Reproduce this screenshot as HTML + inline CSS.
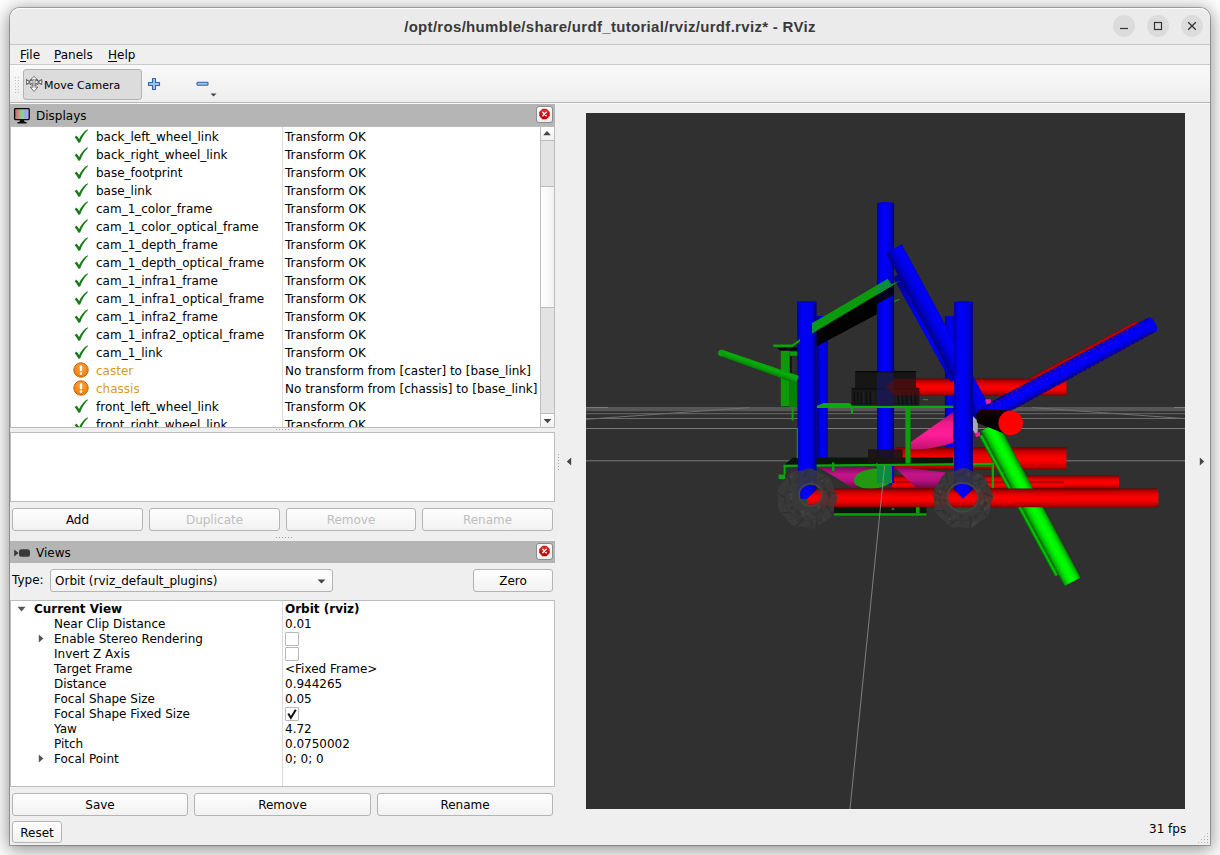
<!DOCTYPE html>
<html lang="en"><head><meta charset="utf-8"><title>RViz</title>
<style>
html,body{margin:0;padding:0;background:#fff;}
body{width:1220px;height:855px;overflow:hidden;position:relative;font-family:"DejaVu Sans","Liberation Sans",sans-serif;font-size:12px;color:#000;}
.abs{position:absolute;}
#win{position:absolute;left:10px;top:8px;width:1200px;height:837px;background:#efefef;border-radius:10px 10px 0 0;box-shadow:0 0 0 1px rgba(0,0,0,0.26),0 3px 18px 2px rgba(0,0,0,0.44);}
#title{position:absolute;left:0;top:0;width:1200px;height:36px;background:#ebebeb;box-shadow:inset 0 1px 0 #fdfdfd;border-radius:10px 10px 0 0;border-bottom:1px solid #c6c6c6;}
#title .t{position:absolute;left:0;width:1200px;top:10px;letter-spacing:0.31px;text-align:center;font-family:"Liberation Sans","DejaVu Sans",sans-serif;font-weight:bold;font-size:15px;color:#3a3a3a;white-space:nowrap;}
.wb{position:absolute;top:7px;width:22px;height:22px;border-radius:11px;background:#dcdcdc;}
#menu{position:absolute;left:0;top:37px;width:1200px;height:19px;background:#efefef;border-bottom:1px solid #c9c9c9;}
#menu span{position:absolute;top:3px;font-size:12px;white-space:nowrap;}
#menu u{text-decoration:underline;text-underline-offset:2px;}
#tool{position:absolute;left:0;top:57px;width:1200px;height:37px;background:linear-gradient(#f9f9f9,#eeeeee);border-bottom:1px solid #b6b6b6;box-shadow:0 1px 0 #f9f9f9;}
.btn{position:absolute;box-sizing:border-box;border:1px solid #b4b4b4;border-radius:3px;background:linear-gradient(#fefefe,#f2f2f2);text-align:center;white-space:nowrap;font-size:12px;}
.btn.dis{color:#bebebe;}
.dock{position:absolute;left:0;width:545px;height:22px;background:#b5b5b5;}
.dock .lbl{position:absolute;left:26px;top:5px;font-size:12px;}
.cls{position:absolute;left:525.5px;top:2px;width:17px;height:16.5px;box-sizing:border-box;border:1px solid #8c8c8c;border-radius:3px;background:linear-gradient(#ffffff,#ececec);}
.tree{position:absolute;left:0;width:545px;box-sizing:border-box;border:1px solid #bcbcbc;background:#fff;overflow:hidden;}
.r{position:absolute;left:0;height:18px;width:545px;white-space:nowrap;}
.r .ic{position:absolute;left:62.3px;top:0px;}
.r .n{position:absolute;left:85px;top:2px;font-size:12px;}
.r .v{position:absolute;left:274px;top:2px;font-size:12px;}
.r.warn .n{color:#d89a18;}
.vr{position:absolute;left:0;height:15px;width:545px;white-space:nowrap;}
.vr .vn{position:absolute;top:1px;font-size:12px;line-height:15px;}
.vr .vv{position:absolute;left:274px;top:1px;font-size:12px;line-height:15px;}
.vr .b{font-weight:bold;}
.vr .tw{position:absolute;}
.cb{position:absolute;left:274px;top:0.5px;width:14px;height:14px;box-sizing:border-box;border:1px solid #b9b9b9;background:#fff;border-radius:1px;}
#view{position:absolute;left:576px;top:105px;width:599px;height:696px;background:#303030;overflow:hidden;}
</style></head><body>
<div id="win">
 <div id="title"><div class="t">/opt/ros/humble/share/urdf_tutorial/rviz/urdf.rviz* - RViz</div>
  <div class="wb" style="left:1103px"><svg width="22" height="22" viewBox="0 0 22 22"><path d="M7 13.5 H15" stroke="#333" stroke-width="1.2"/></svg></div>
  <div class="wb" style="left:1137px"><svg width="22" height="22" viewBox="0 0 22 22"><rect x="7.5" y="7.5" width="7" height="7" fill="none" stroke="#333" stroke-width="1.2"/></svg></div>
  <div class="wb" style="left:1171px"><svg width="22" height="22" viewBox="0 0 22 22"><path d="M7.2 7.2 L14.8 14.8 M14.8 7.2 L7.2 14.8" stroke="#333" stroke-width="1.3"/></svg></div>
 </div>
 <div id="menu"><span style="left:10px"><u>F</u>ile</span><span style="left:44px"><u>P</u>anels</span><span style="left:98px"><u>H</u>elp</span></div>
 <div id="tool">
  <svg class="abs" style="left:3px;top:11px" width="8" height="18" viewBox="0 0 8 18"><g fill="#bdbdbd"><rect x="2" y="1" width="1" height="1"/><rect x="5" y="1" width="1" height="1"/><rect x="2" y="4" width="1" height="1"/><rect x="5" y="4" width="1" height="1"/><rect x="2" y="7" width="1" height="1"/><rect x="5" y="7" width="1" height="1"/><rect x="2" y="10" width="1" height="1"/><rect x="5" y="10" width="1" height="1"/><rect x="2" y="13" width="1" height="1"/><rect x="5" y="13" width="1" height="1"/><rect x="2" y="16" width="1" height="1"/><rect x="5" y="16" width="1" height="1"/></g></svg>
  <div class="abs" style="left:13px;top:4px;width:119px;height:31px;box-sizing:border-box;border:1px solid #b2b2b2;border-radius:3px;background:#dcdcdc;">
   <svg class="abs" style="left:1.9px;top:6.4px" width="17" height="17" viewBox="0 0 17 17"><g stroke="#454545" stroke-width="0.75" stroke-linejoin="round" fill="#fff"><path d="M8 0.5 L11.6 3.8 L8.8 3.8 L8.8 11.2 L11.8 11.2 L8 15.4 L4.3 11.2 L7.2 11.2 L7.2 3.8 L4.4 3.8 Z" fill="#f4f4f4"/><path d="M0.4 3.7 L3.4 5 Q5.4 3.4 8 3.4 Q10.6 3.4 12.6 5 L15.7 3.7 L15.7 8.4 L13 7.4 Q10.8 9.6 8 9.6 Q5.2 9.6 3 7.4 L0.4 8.4 Z" fill="none"/><path d="M0.4 3.7 L3.6 6 L0.4 8.4 Z"/><path d="M15.7 3.7 L12.4 6 L15.7 8.4 Z"/><ellipse cx="8" cy="5.8" rx="4.3" ry="2.1" fill="none"/></g><rect x="7.4" y="4" width="1.2" height="7" fill="#dcdcdc"/><path d="M8 1.2 L10.4 3.4 H5.6 Z M8 14.6 L10.4 11.7 H5.6 Z" fill="#fff"/></svg>
   <span class="abs" style="left:20px;top:9px;font-size:11px;white-space:nowrap">Move Camera</span>
  </div>
  <svg class="abs" style="left:137px;top:12px" width="14" height="14" viewBox="0 0 14 14"><path d="M5.5 1.5 H8.5 V5.5 H12.5 V8.5 H8.5 V12.5 H5.5 V8.5 H1.5 V5.5 H5.5 Z" fill="#9ec0ea" stroke="#3565a4" stroke-width="1.1" stroke-linejoin="round"/></svg>
  <svg class="abs" style="left:185px;top:16px" width="14" height="6" viewBox="0 0 14 6"><rect x="2" y="1.3" width="11" height="3" rx="0.8" fill="#9ec0ea" stroke="#3565a4" stroke-width="1.1"/></svg>
  <svg class="abs" style="left:199.5px;top:28px" width="7" height="4" viewBox="0 0 7 4"><path d="M0.5 0.5 H6.5 L3.5 3.6 Z" fill="#444"/></svg>
 </div>

 <!-- Displays dock -->
 <div class="dock" style="top:96px">
  <svg class="abs" style="left:3px;top:3px" width="18" height="18" viewBox="0 0 18 18"><defs><linearGradient id="mg" x1="0" x2="1" y1="0" y2="0"><stop offset="0" stop-color="#c86a6a"/><stop offset="0.28" stop-color="#d08888"/><stop offset="0.40" stop-color="#86cc86"/><stop offset="0.60" stop-color="#8ed28e"/><stop offset="0.72" stop-color="#a2a2f2"/><stop offset="1" stop-color="#b0b0f8"/></linearGradient></defs><rect x="1.6" y="1.6" width="14.6" height="11" rx="0.8" fill="url(#mg)" stroke="#0a0a0a" stroke-width="1.3"/><path d="M7 13 H11 L11.6 15 H6.4 Z" fill="#0a0a0a"/><rect x="4.2" y="15" width="9.6" height="1.6" rx="0.8" fill="#0a0a0a"/></svg>
  <span class="lbl">Displays</span>
  <div class="cls"><svg width="15" height="15" viewBox="0 0 15 15" style="position:absolute;left:0;top:0"><defs><linearGradient id="cg1" x1="0" x2="0" y1="0" y2="1"><stop offset="0" stop-color="#e23030"/><stop offset="1" stop-color="#b80000"/></linearGradient></defs><polygon points="5.5,2.1 9.5,2.1 12.4,5 12.4,9 9.5,11.9 5.5,11.9 2.6,9 2.6,5" fill="url(#cg1)" stroke="#a80a0a" stroke-width="0.6"/><path d="M5.8 5.3 L9.2 8.7 M9.2 5.3 L5.8 8.7" stroke="#fff" stroke-width="1.4" stroke-linecap="round"/></svg></div>
 </div>
 <div class="tree" style="top:118px;height:302px;">
  <div class="r" style="top:1px"><svg class="ic" width="16" height="16" viewBox="0 0 16 16"><path d="M1.6 9.2 L3.6 7.6 L6.2 11 C8 6.8 10.8 3.4 14.6 1.2 L15 1.9 C11.6 5 9 9.2 7.2 14.6 L5.4 14.8 C4.4 12.6 3.2 10.8 1.6 9.2 Z" fill="#1b7a1b"/></svg><span class="n">back_left_wheel_link</span><span class="v">Transform OK</span></div>
<div class="r" style="top:19px"><svg class="ic" width="16" height="16" viewBox="0 0 16 16"><path d="M1.6 9.2 L3.6 7.6 L6.2 11 C8 6.8 10.8 3.4 14.6 1.2 L15 1.9 C11.6 5 9 9.2 7.2 14.6 L5.4 14.8 C4.4 12.6 3.2 10.8 1.6 9.2 Z" fill="#1b7a1b"/></svg><span class="n">back_right_wheel_link</span><span class="v">Transform OK</span></div>
<div class="r" style="top:37px"><svg class="ic" width="16" height="16" viewBox="0 0 16 16"><path d="M1.6 9.2 L3.6 7.6 L6.2 11 C8 6.8 10.8 3.4 14.6 1.2 L15 1.9 C11.6 5 9 9.2 7.2 14.6 L5.4 14.8 C4.4 12.6 3.2 10.8 1.6 9.2 Z" fill="#1b7a1b"/></svg><span class="n">base_footprint</span><span class="v">Transform OK</span></div>
<div class="r" style="top:55px"><svg class="ic" width="16" height="16" viewBox="0 0 16 16"><path d="M1.6 9.2 L3.6 7.6 L6.2 11 C8 6.8 10.8 3.4 14.6 1.2 L15 1.9 C11.6 5 9 9.2 7.2 14.6 L5.4 14.8 C4.4 12.6 3.2 10.8 1.6 9.2 Z" fill="#1b7a1b"/></svg><span class="n">base_link</span><span class="v">Transform OK</span></div>
<div class="r" style="top:73px"><svg class="ic" width="16" height="16" viewBox="0 0 16 16"><path d="M1.6 9.2 L3.6 7.6 L6.2 11 C8 6.8 10.8 3.4 14.6 1.2 L15 1.9 C11.6 5 9 9.2 7.2 14.6 L5.4 14.8 C4.4 12.6 3.2 10.8 1.6 9.2 Z" fill="#1b7a1b"/></svg><span class="n">cam_1_color_frame</span><span class="v">Transform OK</span></div>
<div class="r" style="top:91px"><svg class="ic" width="16" height="16" viewBox="0 0 16 16"><path d="M1.6 9.2 L3.6 7.6 L6.2 11 C8 6.8 10.8 3.4 14.6 1.2 L15 1.9 C11.6 5 9 9.2 7.2 14.6 L5.4 14.8 C4.4 12.6 3.2 10.8 1.6 9.2 Z" fill="#1b7a1b"/></svg><span class="n">cam_1_color_optical_frame</span><span class="v">Transform OK</span></div>
<div class="r" style="top:109px"><svg class="ic" width="16" height="16" viewBox="0 0 16 16"><path d="M1.6 9.2 L3.6 7.6 L6.2 11 C8 6.8 10.8 3.4 14.6 1.2 L15 1.9 C11.6 5 9 9.2 7.2 14.6 L5.4 14.8 C4.4 12.6 3.2 10.8 1.6 9.2 Z" fill="#1b7a1b"/></svg><span class="n">cam_1_depth_frame</span><span class="v">Transform OK</span></div>
<div class="r" style="top:127px"><svg class="ic" width="16" height="16" viewBox="0 0 16 16"><path d="M1.6 9.2 L3.6 7.6 L6.2 11 C8 6.8 10.8 3.4 14.6 1.2 L15 1.9 C11.6 5 9 9.2 7.2 14.6 L5.4 14.8 C4.4 12.6 3.2 10.8 1.6 9.2 Z" fill="#1b7a1b"/></svg><span class="n">cam_1_depth_optical_frame</span><span class="v">Transform OK</span></div>
<div class="r" style="top:145px"><svg class="ic" width="16" height="16" viewBox="0 0 16 16"><path d="M1.6 9.2 L3.6 7.6 L6.2 11 C8 6.8 10.8 3.4 14.6 1.2 L15 1.9 C11.6 5 9 9.2 7.2 14.6 L5.4 14.8 C4.4 12.6 3.2 10.8 1.6 9.2 Z" fill="#1b7a1b"/></svg><span class="n">cam_1_infra1_frame</span><span class="v">Transform OK</span></div>
<div class="r" style="top:163px"><svg class="ic" width="16" height="16" viewBox="0 0 16 16"><path d="M1.6 9.2 L3.6 7.6 L6.2 11 C8 6.8 10.8 3.4 14.6 1.2 L15 1.9 C11.6 5 9 9.2 7.2 14.6 L5.4 14.8 C4.4 12.6 3.2 10.8 1.6 9.2 Z" fill="#1b7a1b"/></svg><span class="n">cam_1_infra1_optical_frame</span><span class="v">Transform OK</span></div>
<div class="r" style="top:181px"><svg class="ic" width="16" height="16" viewBox="0 0 16 16"><path d="M1.6 9.2 L3.6 7.6 L6.2 11 C8 6.8 10.8 3.4 14.6 1.2 L15 1.9 C11.6 5 9 9.2 7.2 14.6 L5.4 14.8 C4.4 12.6 3.2 10.8 1.6 9.2 Z" fill="#1b7a1b"/></svg><span class="n">cam_1_infra2_frame</span><span class="v">Transform OK</span></div>
<div class="r" style="top:199px"><svg class="ic" width="16" height="16" viewBox="0 0 16 16"><path d="M1.6 9.2 L3.6 7.6 L6.2 11 C8 6.8 10.8 3.4 14.6 1.2 L15 1.9 C11.6 5 9 9.2 7.2 14.6 L5.4 14.8 C4.4 12.6 3.2 10.8 1.6 9.2 Z" fill="#1b7a1b"/></svg><span class="n">cam_1_infra2_optical_frame</span><span class="v">Transform OK</span></div>
<div class="r" style="top:217px"><svg class="ic" width="16" height="16" viewBox="0 0 16 16"><path d="M1.6 9.2 L3.6 7.6 L6.2 11 C8 6.8 10.8 3.4 14.6 1.2 L15 1.9 C11.6 5 9 9.2 7.2 14.6 L5.4 14.8 C4.4 12.6 3.2 10.8 1.6 9.2 Z" fill="#1b7a1b"/></svg><span class="n">cam_1_link</span><span class="v">Transform OK</span></div>
<div class="r warn" style="top:235px"><svg class="ic" width="16" height="16" viewBox="0 0 16 16"><defs><radialGradient id="wg" cx="50%" cy="35%" r="65%"><stop offset="0" stop-color="#ffa64a"/><stop offset="1" stop-color="#f07800"/></radialGradient></defs><circle cx="8" cy="8" r="7.2" fill="url(#wg)" stroke="#c86400" stroke-width="1"/><rect x="6.9" y="3.2" width="2.2" height="6" rx="1" fill="#fff"/><circle cx="8" cy="11.6" r="1.3" fill="#fff"/></svg><span class="n">caster</span><span class="v">No transform from [caster] to [base_link]</span></div>
<div class="r warn" style="top:253px"><svg class="ic" width="16" height="16" viewBox="0 0 16 16"><defs><radialGradient id="wg2" cx="50%" cy="35%" r="65%"><stop offset="0" stop-color="#ffa64a"/><stop offset="1" stop-color="#f07800"/></radialGradient></defs><circle cx="8" cy="8" r="7.2" fill="url(#wg2)" stroke="#c86400" stroke-width="1"/><rect x="6.9" y="3.2" width="2.2" height="6" rx="1" fill="#fff"/><circle cx="8" cy="11.6" r="1.3" fill="#fff"/></svg><span class="n">chassis</span><span class="v">No transform from [chassis] to [base_link]</span></div>
<div class="r" style="top:271px"><svg class="ic" width="16" height="16" viewBox="0 0 16 16"><path d="M1.6 9.2 L3.6 7.6 L6.2 11 C8 6.8 10.8 3.4 14.6 1.2 L15 1.9 C11.6 5 9 9.2 7.2 14.6 L5.4 14.8 C4.4 12.6 3.2 10.8 1.6 9.2 Z" fill="#1b7a1b"/></svg><span class="n">front_left_wheel_link</span><span class="v">Transform OK</span></div>
<div class="r" style="top:289px"><svg class="ic" width="16" height="16" viewBox="0 0 16 16"><path d="M1.6 9.2 L3.6 7.6 L6.2 11 C8 6.8 10.8 3.4 14.6 1.2 L15 1.9 C11.6 5 9 9.2 7.2 14.6 L5.4 14.8 C4.4 12.6 3.2 10.8 1.6 9.2 Z" fill="#1b7a1b"/></svg><span class="n">front_right_wheel_link</span><span class="v">Transform OK</span></div>
  <div class="abs" style="left:271px;top:0;width:1px;height:300px;background:#dcdcdc"></div>
  <!-- scrollbar -->
  <div class="abs" style="left:529px;top:0;width:14px;height:300px;background:#e3e3e3;border-left:1px solid #bcbcbc;box-sizing:border-box;">
   <div class="abs" style="left:0;top:0;width:13px;height:13px;background:linear-gradient(#fff,#f1f1f1);border-bottom:1px solid #bcbcbc;"><svg width="13" height="13" viewBox="0 0 13 13"><path d="M2.2 8.2 L6 4 L9.8 8.2 Z" fill="#444"/></svg></div>
   <div class="abs" style="left:0;top:59px;width:13px;height:120px;background:linear-gradient(90deg,#fff,#f3f3f3);border-top:1px solid #bcbcbc;border-bottom:1px solid #bcbcbc;"></div>
   <div class="abs" style="left:0;top:286px;width:13px;height:14px;background:linear-gradient(#fff,#f1f1f1);border-top:1px solid #bcbcbc;"><svg width="13" height="14" viewBox="0 0 13 14"><path d="M2.6 5 L6.5 9.2 L10.4 5 Z" fill="#444"/></svg></div>
  </div>
 </div>
 <div class="tree" style="top:424px;height:70px;"></div>
 <div class="btn" style="left:2px;top:500px;width:131px;height:23px;line-height:21px;padding-top:1px;">Add</div>
 <div class="btn dis" style="left:139px;top:500px;width:131px;height:23px;line-height:21px;padding-top:1px;">Duplicate</div>
 <div class="btn dis" style="left:276px;top:500px;width:130px;height:23px;line-height:21px;padding-top:1px;">Remove</div>
 <div class="btn dis" style="left:412px;top:500px;width:131px;height:23px;line-height:21px;padding-top:1px;">Rename</div>

 <!-- Views dock -->
 <div class="dock" style="top:533px">
  <svg class="abs" style="left:3px;top:5px" width="18" height="12" viewBox="0 0 18 12"><path d="M1.2 3.4 L5.6 7 L1.2 10.6 Z" fill="#3a3a3a"/><rect x="6" y="3.2" width="11" height="7.6" rx="2.6" fill="#3a3a3a"/></svg>
  <span class="lbl">Views</span>
  <div class="cls"><svg width="15" height="15" viewBox="0 0 15 15" style="position:absolute;left:0;top:0"><defs><linearGradient id="cg2" x1="0" x2="0" y1="0" y2="1"><stop offset="0" stop-color="#e23030"/><stop offset="1" stop-color="#b80000"/></linearGradient></defs><polygon points="5.5,2.1 9.5,2.1 12.4,5 12.4,9 9.5,11.9 5.5,11.9 2.6,9 2.6,5" fill="url(#cg2)" stroke="#a80a0a" stroke-width="0.6"/><path d="M5.8 5.3 L9.2 8.7 M9.2 5.3 L5.8 8.7" stroke="#fff" stroke-width="1.4" stroke-linecap="round"/></svg></div>
 </div>
 <span class="abs" style="left:2px;top:565px;font-size:12px;">Type:</span>
 <div class="btn" style="left:40px;top:561px;width:283px;height:23px;text-align:left;line-height:21px;padding-top:1px;"><span style="margin-left:4px">Orbit (rviz_default_plugins)</span><svg class="abs" style="left:266px;top:9px" width="9" height="5" viewBox="0 0 9 5"><path d="M0.6 0.5 H8.4 L4.5 4.6 Z" fill="#444"/></svg></div>
 <div class="btn" style="left:463px;top:561px;width:80px;height:23px;line-height:21px;padding-top:1px;">Zero</div>
 <div class="tree" style="top:592px;height:187px;">
  <div class="vr" style="top:0px"><svg class="tw" style="left:6px;top:5px" width="9" height="6" viewBox="0 0 9 6"><path d="M0.5 0.8 L8.5 0.8 L4.5 5.4 Z" fill="#555"/></svg><span class="vn b" style="left:23px">Current View</span><span class="vv b">Orbit (rviz)</span></div>
<div class="vr" style="top:15px"><span class="vn" style="left:43px">Near Clip Distance</span><span class="vv">0.01</span></div>
<div class="vr" style="top:30px"><svg class="tw" style="left:27px;top:3px" width="6" height="9" viewBox="0 0 6 9"><path d="M0.8 0.5 L5.4 4.5 L0.8 8.5 Z" fill="#555"/></svg><span class="vn" style="left:43px">Enable Stereo Rendering</span><span class="cb"></span></div>
<div class="vr" style="top:45px"><span class="vn" style="left:43px">Invert Z Axis</span><span class="cb"></span></div>
<div class="vr" style="top:60px"><span class="vn" style="left:43px">Target Frame</span><span class="vv">&lt;Fixed Frame&gt;</span></div>
<div class="vr" style="top:75px"><span class="vn" style="left:43px">Distance</span><span class="vv">0.944265</span></div>
<div class="vr" style="top:90px"><span class="vn" style="left:43px">Focal Shape Size</span><span class="vv">0.05</span></div>
<div class="vr" style="top:105px"><span class="vn" style="left:43px">Focal Shape Fixed Size</span><span class="cb"><svg width="12" height="12" viewBox="0 0 12 12" style="position:absolute;left:0;top:0"><path d="M2.2 5.4 L4.9 9.8 L9.8 1.8" fill="none" stroke="#111" stroke-width="2"/></svg></span></div>
<div class="vr" style="top:120px"><span class="vn" style="left:43px">Yaw</span><span class="vv">4.72</span></div>
<div class="vr" style="top:135px"><span class="vn" style="left:43px">Pitch</span><span class="vv">0.0750002</span></div>
<div class="vr" style="top:150px"><svg class="tw" style="left:27px;top:3px" width="6" height="9" viewBox="0 0 6 9"><path d="M0.8 0.5 L5.4 4.5 L0.8 8.5 Z" fill="#555"/></svg><span class="vn" style="left:43px">Focal Point</span><span class="vv">0; 0; 0</span></div>
  <div class="abs" style="left:271px;top:0;width:1px;height:185px;background:#dcdcdc"></div>
 </div>
 <div class="btn" style="left:2px;top:785px;width:176px;height:23px;line-height:21px;padding-top:1px;">Save</div>
 <div class="btn" style="left:184px;top:785px;width:177px;height:23px;line-height:21px;padding-top:1px;">Remove</div>
 <div class="btn" style="left:367px;top:785px;width:176px;height:23px;line-height:21px;padding-top:1px;">Rename</div>
 <div class="btn" style="left:2px;top:813px;width:50px;height:22px;line-height:20px;padding-top:1px;">Reset</div>
 <span class="abs" style="left:1139px;top:814px;font-size:12px;white-space:nowrap">31 fps</span>

 <!-- splitter dots -->
 <div class="abs" style="left:266px;top:421px;width:1px;height:1px;background:#a4a4a4"></div><div class="abs" style="left:269px;top:421px;width:1px;height:1px;background:#a4a4a4"></div><div class="abs" style="left:272px;top:421px;width:1px;height:1px;background:#a4a4a4"></div><div class="abs" style="left:275px;top:421px;width:1px;height:1px;background:#a4a4a4"></div><div class="abs" style="left:278px;top:421px;width:1px;height:1px;background:#a4a4a4"></div><div class="abs" style="left:281px;top:421px;width:1px;height:1px;background:#a4a4a4"></div><div class="abs" style="left:266px;top:529px;width:1px;height:1px;background:#a4a4a4"></div><div class="abs" style="left:269px;top:529px;width:1px;height:1px;background:#a4a4a4"></div><div class="abs" style="left:272px;top:529px;width:1px;height:1px;background:#a4a4a4"></div><div class="abs" style="left:275px;top:529px;width:1px;height:1px;background:#a4a4a4"></div><div class="abs" style="left:278px;top:529px;width:1px;height:1px;background:#a4a4a4"></div><div class="abs" style="left:281px;top:529px;width:1px;height:1px;background:#a4a4a4"></div><div class="abs" style="left:548px;top:446px;width:1px;height:1px;background:#a4a4a4"></div><div class="abs" style="left:548px;top:449px;width:1px;height:1px;background:#a4a4a4"></div><div class="abs" style="left:548px;top:452px;width:1px;height:1px;background:#a4a4a4"></div><div class="abs" style="left:548px;top:455px;width:1px;height:1px;background:#a4a4a4"></div><div class="abs" style="left:548px;top:458px;width:1px;height:1px;background:#a4a4a4"></div><div class="abs" style="left:548px;top:461px;width:1px;height:1px;background:#a4a4a4"></div><div class="abs" style="left:1197px;top:825px;width:1px;height:1px;background:#b4b4b4"></div><div class="abs" style="left:1197px;top:828px;width:1px;height:1px;background:#b4b4b4"></div><div class="abs" style="left:1194px;top:828px;width:1px;height:1px;background:#b4b4b4"></div><div class="abs" style="left:1197px;top:831px;width:1px;height:1px;background:#b4b4b4"></div><div class="abs" style="left:1194px;top:831px;width:1px;height:1px;background:#b4b4b4"></div><div class="abs" style="left:1191px;top:831px;width:1px;height:1px;background:#b4b4b4"></div><div class="abs" style="left:1197px;top:834px;width:1px;height:1px;background:#b4b4b4"></div><div class="abs" style="left:1194px;top:834px;width:1px;height:1px;background:#b4b4b4"></div><div class="abs" style="left:1191px;top:834px;width:1px;height:1px;background:#b4b4b4"></div><div class="abs" style="left:1188px;top:834px;width:1px;height:1px;background:#b4b4b4"></div>
 <!-- splitter arrows -->
 <svg class="abs" style="left:556px;top:448.5px" width="6" height="9" viewBox="0 0 6 9"><path d="M5.2 0.6 L0.8 4.5 L5.2 8.4 Z" fill="#444"/></svg>
 <svg class="abs" style="left:1189px;top:448.5px" width="6" height="9" viewBox="0 0 6 9"><path d="M0.8 0.6 L5.2 4.5 L0.8 8.4 Z" fill="#444"/></svg>

 <div id="view"><svg width="599" height="696" viewBox="586 113 599 696" style="position:absolute;left:0;top:0;display:block">

<defs>
<linearGradient id="bv" x1="0" x2="1" y1="0" y2="0"><stop offset="0" stop-color="#0000a8"/><stop offset="0.15" stop-color="#0000e0"/><stop offset="0.42" stop-color="#0000ff"/><stop offset="0.72" stop-color="#0000e4"/><stop offset="0.92" stop-color="#0000a0"/><stop offset="1" stop-color="#000080"/></linearGradient>
<linearGradient id="bs" x1="0" x2="0" y1="0" y2="1"><stop offset="0" stop-color="#0000d0"/><stop offset="0.2" stop-color="#0000ff"/><stop offset="0.5" stop-color="#0000e6"/><stop offset="0.82" stop-color="#0000ac"/><stop offset="1" stop-color="#000074"/></linearGradient>
<linearGradient id="bvd" x1="0" x2="1" y1="0" y2="0"><stop offset="0" stop-color="#00008c"/><stop offset="0.4" stop-color="#0000ee"/><stop offset="0.7" stop-color="#0000f6"/><stop offset="1" stop-color="#0000b0"/></linearGradient>
<linearGradient id="rh" x1="0" x2="0" y1="0" y2="1"><stop offset="0" stop-color="#6c0000"/><stop offset="0.12" stop-color="#b00000"/><stop offset="0.3" stop-color="#e40000"/><stop offset="0.5" stop-color="#ff0000"/><stop offset="0.68" stop-color="#f00000"/><stop offset="0.86" stop-color="#c00000"/><stop offset="1" stop-color="#7c0000"/></linearGradient>
<linearGradient id="gh" x1="0" x2="0" y1="0" y2="1"><stop offset="0" stop-color="#006400"/><stop offset="0.12" stop-color="#00b000"/><stop offset="0.3" stop-color="#00e800"/><stop offset="0.5" stop-color="#00ff00"/><stop offset="0.7" stop-color="#00f000"/><stop offset="0.88" stop-color="#00b800"/><stop offset="1" stop-color="#006800"/></linearGradient>
<linearGradient id="gd2" x1="0" x2="0" y1="0" y2="1"><stop offset="0" stop-color="#0aa00a"/><stop offset="0.35" stop-color="#0aac0a"/><stop offset="0.7" stop-color="#099409"/><stop offset="1" stop-color="#066a06"/></linearGradient>
<linearGradient id="rdk" x1="0" x2="0" y1="0" y2="1"><stop offset="0" stop-color="#8c0000"/><stop offset="0.5" stop-color="#c80000"/><stop offset="1" stop-color="#a00010"/></linearGradient>
<linearGradient id="gd3" x1="0" x2="0" y1="0" y2="1"><stop offset="0" stop-color="#006000"/><stop offset="0.5" stop-color="#00d000"/><stop offset="1" stop-color="#005800"/></linearGradient>
<linearGradient id="gd" x1="0" x2="0" y1="0" y2="1"><stop offset="0" stop-color="#087808"/><stop offset="0.4" stop-color="#0aa80a"/><stop offset="0.7" stop-color="#0aa00a"/><stop offset="1" stop-color="#066006"/></linearGradient>
<linearGradient id="bh" x1="0" x2="0" y1="0" y2="1"><stop offset="0" stop-color="#000098"/><stop offset="0.18" stop-color="#0000e0"/><stop offset="0.42" stop-color="#0000ff"/><stop offset="0.68" stop-color="#0000ea"/><stop offset="0.9" stop-color="#0000a4"/><stop offset="1" stop-color="#000070"/></linearGradient>
<linearGradient id="ph" x1="0" x2="0" y1="0" y2="1"><stop offset="0" stop-color="#a80c64"/><stop offset="0.3" stop-color="#f01a8c"/><stop offset="0.6" stop-color="#ff1e96"/><stop offset="1" stop-color="#c01070"/></linearGradient>
<linearGradient id="mh" x1="0" x2="0" y1="0" y2="1"><stop offset="0" stop-color="#80085a"/><stop offset="0.35" stop-color="#c4148a"/><stop offset="0.65" stop-color="#b81080"/><stop offset="1" stop-color="#700848"/></linearGradient>
<linearGradient id="kh" x1="0" x2="0" y1="0" y2="1"><stop offset="0" stop-color="#200000"/><stop offset="0.3" stop-color="#0a0000"/><stop offset="1" stop-color="#000000"/></linearGradient>
<radialGradient id="wh" cx="0.5" cy="0.5" r="0.5"><stop offset="0.42" stop-color="#3c3c3c"/><stop offset="0.6" stop-color="#484848"/><stop offset="0.8" stop-color="#444444"/><stop offset="1" stop-color="#3a3a3a"/></radialGradient>
<clipPath id="vc"><rect x="586" y="113" width="599" height="696"/></clipPath>
</defs>
<g clip-path="url(#vc)">
<rect x="586" y="113" width="599" height="696" fill="#303030" />
<rect x="586" y="407" width="599" height="4.2" fill="#565656" />
<rect x="586" y="407" width="22" height="1" fill="#7a7a7a" />
<rect x="1174" y="407" width="11" height="1" fill="#7a7a7a" />
<rect x="586" y="413" width="599" height="1.2" fill="#5e5e5e" />
<rect x="586" y="418" width="599" height="1" fill="#6c6c6c" />
<rect x="586" y="428" width="599" height="1" fill="#797979" />
<rect x="586" y="460.3" width="599" height="1" fill="#7b7b7b" />
<line x1="586" y1="419.3" x2="749.5" y2="407.6" stroke="#707070" stroke-width="1" />
<line x1="1032" y1="407.6" x2="1185" y2="418.6" stroke="#707070" stroke-width="1" />
<g transform="translate(1030.00,379.60) rotate(-28.211)"><polygon points="0,-1.70 121.42,-1.40 121.42,1.40 0,1.70" fill="url(#rdk)" /></g>
<rect x="816.4" y="316" width="11.3" height="142" fill="url(#bvd)" />
<rect x="944.9" y="316.1" width="9.4" height="131" fill="url(#bvd)" />
<polygon points="885.7,387 895,378.5 1066.5,378.5 1066.5,395.6 893.5,395.6" fill="url(#rh)" />
<rect x="877" y="203.2" width="17.1" height="281.3" fill="url(#bv)" />
<ellipse cx="885.5" cy="203.4" rx="8.5" ry="1.3" fill="#0000dc"/>
<g transform="translate(895.40,276.00) rotate(60.885)"><polygon points="0,-2.70 119.61,-3.00 119.61,3.00 0,2.70" fill="url(#bvd)" /></g>
<polygon points="816.4,330.4 876.9,294.4 876.9,314.2 816.4,346.5" fill="#020203" />
<rect x="894" y="447.4" width="172.4" height="22.4" fill="url(#rh)" />
<rect x="894" y="475.5" width="225" height="13.2" fill="url(#rh)" />
<rect x="892" y="481.4" width="172" height="7" fill="url(#rh)" />
<polygon points="910.8,442.1 953.3,411.9 953.3,443.1 930,448.4 915,449.6 910.8,449" fill="url(#ph)" />
<g transform="translate(893.90,248.40) rotate(61.835)"><polygon points="0,-8.95 188.98,-9.80 188.98,9.80 0,8.95" fill="url(#bs)" /></g>
<g transform="translate(985.00,415.20) rotate(-28.445)"><polygon points="0,-8.70 190.84,-7.95 190.84,7.95 0,8.70" fill="url(#bh)" /></g>
<ellipse cx="1152.6" cy="324.4" rx="3" ry="7.8" transform="rotate(-28.4 1152.6 324.4)" fill="#0000f0"/>
<line x1="991" y1="404.4" x2="1140" y2="323.6" stroke="#a00050" stroke-width="0.9" stroke-dasharray="3 2.5" stroke-opacity="0.8"/>
<line x1="1012" y1="410.0" x2="1150" y2="334.2" stroke="#98005c" stroke-width="0.9" stroke-dasharray="1.5 3.5" stroke-opacity="0.85"/>
<line x1="996" y1="406" x2="1112" y2="343" stroke="#9800a0" stroke-width="0.8" stroke-dasharray="1.2 3.2" stroke-opacity="0.8"/>
<polygon points="985,399.6 990.5,399 991,403 986.5,404.4" fill="#f01e96" />
<polygon points="972.8,416 978,421 977.6,433 975.5,434 972.8,430" fill="#a8a8a8" />
<polygon points="975,433 980,432 980,436 976,437" fill="#f01e96" />
<g transform="translate(981.00,435.40) rotate(61.631)"><polygon points="0,-2.30 159.11,-2.10 159.11,2.10 0,2.30" fill="url(#gd3)" /></g>
<g transform="translate(989.30,426.60) rotate(61.761)"><polygon points="0,-9.70 176.05,-9.00 176.05,9.00 0,9.70" fill="url(#gh)" transform="scale(1,-1)"/></g>
<polygon points="981.5,409.2 1009,410.5 1003.4,433.2 977,422.8 976.2,415 978,410.6" fill="url(#kh)" />
<circle cx="1010.7" cy="422.9" r="12.3" fill="#ff0000"/>
<polygon points="793,457.5 953,457.5 953,465 784,465" fill="#0a160a" />
<path d="M817.4,467 L877,467 L866,470 Q857,478 857,487.8 L852,487.8 Q838,478.5 827.5,472.4 Z" fill="url(#mh)"/>
<polygon points="893.8,466.3 946,472.5 940,488 916,488" fill="url(#mh)" />
<ellipse cx="873.6" cy="478.6" rx="19.8" ry="10" transform="rotate(-7 873.6 478.6)" fill="#229a10"/>
<rect x="877" y="466" width="17" height="17" fill="#0a8c3c" />
<rect x="892" y="466" width="2" height="17" fill="#0000e0" />
<polygon points="783.6,464.7 994,462.7 994,464.9 783.6,466.9" fill="#0aa80a" />
<rect x="783.6" y="464.7" width="2" height="10" fill="#0aa80a" />
<rect x="991.7" y="462.7" width="2.3" height="25.6" fill="#0aa80a" />
<rect x="972" y="465.4" width="20" height="1.2" fill="#088a08" />
<rect x="778.6" y="474.6" width="6.5" height="4.4" fill="#0aa80a" />
<rect x="832" y="462.4" width="2.4" height="8.6" fill="#0aa00a" />
<rect x="876" y="462" width="1.6" height="5" fill="#0aa00a" />
<rect x="868" y="449.3" width="34.6" height="14" fill="#1c1414" fill-opacity="0.9"/>
<rect x="905.4" y="408" width="5.1" height="55.4" fill="#0aa00a" />
<rect x="817" y="405.7" width="136.4" height="2.3" fill="#0aaa0a" />
<polygon points="823.5,403 849,403 853,406 817,406" fill="#0aaa0a" />
<rect x="840" y="403" width="9.6" height="3" fill="#0aaa0a" />
<rect x="851" y="408" width="2" height="5" fill="#0aaa0a" />
<rect x="923" y="399" width="5" height="1.2" fill="#0a9a0a" />
<path d="M837.26,498.60 L836.71,501.21 L835.69,503.68 L834.63,506.03 L833.81,508.40 L833.26,510.89 L832.68,513.48 L831.72,515.98 L830.16,518.11 L828.06,519.76 L825.69,520.99 L823.36,522.11 L821.22,523.40 L819.19,524.96 L817.08,526.57 L814.74,527.86 L812.17,528.50 L809.51,528.41 L806.90,527.83 L804.40,527.19 L801.93,526.81 L799.37,526.69 L796.72,526.57 L794.10,526.06 L791.72,524.89 L789.74,523.11 L788.11,520.99 L786.60,518.90 L784.96,517.01 L783.08,515.28 L781.12,513.48 L779.44,511.40 L778.37,508.98 L778.00,506.34 L778.11,503.68 L778.31,501.10 L778.26,498.60 L777.93,496.07 L777.59,493.43 L777.64,490.76 L778.37,488.22 L779.78,485.96 L781.58,483.98 L783.39,482.14 L784.96,480.19 L786.34,478.04 L787.77,475.80 L789.52,473.78 L791.72,472.31 L794.26,471.48 L796.90,471.13 L799.47,470.87 L801.93,470.39 L804.37,469.63 L806.90,468.83 L809.54,468.42 L812.17,468.70 L814.64,469.70 L816.90,471.13 L819.03,472.59 L821.22,473.80 L823.58,474.78 L826.03,475.80 L828.32,477.18 L830.16,479.09 L831.41,481.44 L832.22,483.98 L832.91,486.47 L833.81,488.80 L834.99,491.07 L836.21,493.43 L837.08,495.96 Z" fill="#363636"/>
<path d="M992.71,498.60 L991.91,501.16 L991.06,503.60 L990.46,506.04 L990.13,508.58 L989.78,511.23 L989.03,513.80 L987.65,516.07 L985.69,517.89 L983.43,519.33 L981.21,520.66 L979.19,522.15 L977.30,523.88 L975.33,525.68 L973.10,527.17 L970.58,528.02 L967.91,528.15 L965.26,527.81 L962.70,527.40 L960.19,527.23 L957.63,527.35 L954.97,527.46 L952.30,527.17 L949.83,526.20 L947.70,524.59 L945.88,522.62 L944.19,520.66 L942.37,518.93 L940.34,517.36 L938.22,515.74 L936.37,513.80 L935.10,511.47 L934.50,508.86 L934.38,506.19 L934.34,503.60 L934.07,501.11 L933.51,498.60 L932.94,496.00 L932.76,493.32 L933.28,490.72 L934.50,488.34 L936.13,486.21 L937.76,484.20 L939.15,482.11 L940.34,479.84 L941.57,477.47 L943.16,475.31 L945.23,473.65 L947.70,472.61 L950.31,472.03 L952.85,471.54 L955.26,470.84 L957.63,469.85 L960.10,468.84 L962.70,468.20 L965.35,468.26 L967.91,469.05 L970.29,470.28 L972.55,471.54 L974.85,472.55 L977.30,473.32 L979.84,474.12 L982.24,475.31 L984.24,477.06 L985.69,479.31 L986.72,481.78 L987.64,484.20 L988.75,486.45 L990.13,488.62 L991.56,490.87 L992.64,493.32 L993.04,495.95 Z" fill="#363636"/>
<ellipse cx="810.6" cy="494.8" rx="11" ry="10.4" fill="#2c472c"/>
<ellipse cx="962.7" cy="497.3" rx="14.8" ry="13.6" fill="#2a452a"/>
<rect x="954.1" y="301.8" width="18.8" height="190" fill="url(#bv)" />
<polygon points="797,301.7 816.5,301.7 816.6,498.6 797.9,498.6" fill="url(#bv)" />
<rect x="796.7" y="428" width="1.2" height="30" fill="#0aa00a" />
<ellipse cx="806.7" cy="302.2" rx="9.7" ry="1.2" fill="#0000d8"/>
<ellipse cx="963.5" cy="302.3" rx="9.4" ry="1.2" fill="#0000d8"/>
<polygon points="876.9,294.4 894,284.2 894,294.5 876.9,304.3" fill="#02021c" />
<polygon points="812,323.2 887.7,279 891.2,284.4 900.8,280.6 812,333.4" fill="#0a9a0e" />
<polygon points="877,285.2 887.7,279 891.2,284.4 893.8,283.4 893.8,284.8 877,294.8" fill="#0a8e3c" />
<polygon points="812,323.2 816.3,320.7 816.3,330.9 812,333.4" fill="#0a9430" />
<line x1="894.2" y1="301.6" x2="899.4" y2="299.2" stroke="#0a9a14" stroke-width="1.2" />
<polygon points="807,507.2 807,498.4 816,488.5 1157,488.5 1158.4,492 1158.4,504 1157,507.2" fill="url(#rh)" />
<polygon points="797,486 816.5,486 816.5,489.6 807.2,498.8 797,498.8" fill="url(#bv)" />
<polygon points="954.1,486 972.9,486 972.9,489.2 962.9,498.7 954.1,489.8" fill="url(#bv)" />
<polygon points="834,507.2 926.5,507.2 926.5,514 834,514" fill="#0a160a" />
<rect x="834" y="513.2" width="92.6" height="2.4" fill="#0aa00a" />
<rect x="916" y="507.2" width="3.6" height="6" fill="#0aa00a" />
<ellipse cx="893" cy="509" rx="1.6" ry="1.2" fill="#4a4a4a"/>
<rect x="780.8" y="350.8" width="8.8" height="55.4" fill="#0a9a0a" />
<rect x="789.6" y="381.5" width="7.4" height="25.6" fill="#088008" />
<rect x="790" y="351.6" width="7" height="4.2" fill="#0aa00a" />
<rect x="790" y="356" width="1.6" height="25" fill="#050505" />
<polygon points="776.7,347.4 797,347.4 797,350.6 780,350.6" fill="#050505" />
<polygon points="773.2,344.6 792,344.6 800,339 800,341.4 792.4,347 773.2,347" fill="#0aa00a" />
<rect x="791.6" y="407" width="2" height="13.6" fill="#0aa00a" />
<g transform="translate(721.20,352.90) rotate(19.444)"><polygon points="0,-3.30 80.81,-4.20 80.81,4.20 0,3.30" fill="url(#gd2)" /></g>
<circle cx="721.4" cy="353" r="3.3" fill="#0a9e0a"/>
<polygon points="855.1,373 858,371 913,371 916,373 916,388 855.1,388" fill="#141414" fill-opacity="0.94"/>
<polygon points="851.4,390 853,387.7 918,387.7 919.4,390 919.4,405.4 851.4,405.4" fill="#181818" fill-opacity="0.92"/>
<rect x="855.1" y="371" width="61" height="1.4" fill="#080808" />
<line x1="854" y1="391" x2="854.8" y2="404.6" stroke="#0c0c0c" stroke-width="1.1" stroke-opacity="0.8"/>
<line x1="857.5" y1="392" x2="858.3" y2="404.6" stroke="#0c0c0c" stroke-width="1.1" stroke-opacity="0.8"/>
<line x1="861" y1="393" x2="861.8" y2="404.6" stroke="#0c0c0c" stroke-width="1.1" stroke-opacity="0.8"/>
<line x1="866" y1="391" x2="866.8" y2="404.6" stroke="#0c0c0c" stroke-width="1.1" stroke-opacity="0.8"/>
<line x1="870" y1="392" x2="870.8" y2="404.6" stroke="#0c0c0c" stroke-width="1.1" stroke-opacity="0.8"/>
<line x1="898" y1="393" x2="898.8" y2="404.6" stroke="#0c0c0c" stroke-width="1.1" stroke-opacity="0.8"/>
<line x1="902" y1="391" x2="902.8" y2="404.6" stroke="#0c0c0c" stroke-width="1.1" stroke-opacity="0.8"/>
<line x1="906.5" y1="392" x2="907.3" y2="404.6" stroke="#0c0c0c" stroke-width="1.1" stroke-opacity="0.8"/>
<line x1="911" y1="393" x2="911.8" y2="404.6" stroke="#0c0c0c" stroke-width="1.1" stroke-opacity="0.8"/>
<line x1="915" y1="391" x2="915.8" y2="404.6" stroke="#0c0c0c" stroke-width="1.1" stroke-opacity="0.8"/>
<line x1="863.5" y1="392" x2="863.5" y2="403" stroke="#2a2a2a" stroke-width="0.8" stroke-opacity="0.7"/>
<line x1="873" y1="392" x2="873" y2="403" stroke="#2a2a2a" stroke-width="0.8" stroke-opacity="0.7"/>
<line x1="896" y1="392" x2="896" y2="403" stroke="#2a2a2a" stroke-width="0.8" stroke-opacity="0.7"/>
<line x1="900" y1="392" x2="900" y2="403" stroke="#2a2a2a" stroke-width="0.8" stroke-opacity="0.7"/>
<line x1="909" y1="392" x2="909" y2="403" stroke="#2a2a2a" stroke-width="0.8" stroke-opacity="0.7"/>
<line x1="913" y1="392" x2="913" y2="403" stroke="#2a2a2a" stroke-width="0.8" stroke-opacity="0.7"/>
<rect x="851.4" y="388" width="68" height="1.6" fill="#101010" />
<rect x="877" y="372.4" width="16.8" height="33" fill="#1a1a64" fill-opacity="0.6"/>
<polygon points="885.7,387 895,378.6 916,378.6 916,387.7 919,387.7 919,395.4 893.5,395.4" fill="#5c0c0c" fill-opacity="0.6"/>
<line x1="884.6" y1="466" x2="850" y2="809" stroke="#9a9a9a" stroke-width="1" stroke-opacity="0.75"/>
<path d="M837.26,498.60 L836.71,501.21 L835.69,503.68 L834.63,506.03 L833.81,508.40 L833.26,510.89 L832.68,513.48 L831.72,515.98 L830.16,518.11 L828.06,519.76 L825.69,520.99 L823.36,522.11 L821.22,523.40 L819.19,524.96 L817.08,526.57 L814.74,527.86 L812.17,528.50 L809.51,528.41 L806.90,527.83 L804.40,527.19 L801.93,526.81 L799.37,526.69 L796.72,526.57 L794.10,526.06 L791.72,524.89 L789.74,523.11 L788.11,520.99 L786.60,518.90 L784.96,517.01 L783.08,515.28 L781.12,513.48 L779.44,511.40 L778.37,508.98 L778.00,506.34 L778.11,503.68 L778.31,501.10 L778.26,498.60 L777.93,496.07 L777.59,493.43 L777.64,490.76 L778.37,488.22 L779.78,485.96 L781.58,483.98 L783.39,482.14 L784.96,480.19 L786.34,478.04 L787.77,475.80 L789.52,473.78 L791.72,472.31 L794.26,471.48 L796.90,471.13 L799.47,470.87 L801.93,470.39 L804.37,469.63 L806.90,468.83 L809.54,468.42 L812.17,468.70 L814.64,469.70 L816.90,471.13 L819.03,472.59 L821.22,473.80 L823.58,474.78 L826.03,475.80 L828.32,477.18 L830.16,479.09 L831.41,481.44 L832.22,483.98 L832.91,486.47 L833.81,488.80 L834.99,491.07 L836.21,493.43 L837.08,495.96 Z M800.00,494.80 a10.6,10.0 0 1,1 21.2,0 a10.6,10.0 0 1,1 -21.2,0 Z" fill="#3a3a3a" fill-opacity="0.84" fill-rule="evenodd"/>
<ellipse cx="819.1" cy="492.3" rx="2.1" ry="1.6" transform="rotate(422 819.1 492.3)" fill="#4c4c4c" fill-opacity="0.5"/>
<ellipse cx="801.5" cy="514.8" rx="2.0" ry="1.9" transform="rotate(198 801.5 514.8)" fill="#2a2a2a" fill-opacity="0.5"/>
<ellipse cx="796.8" cy="512.7" rx="2.0" ry="1.2" transform="rotate(216 796.8 512.7)" fill="#2a2a2a" fill-opacity="0.5"/>
<ellipse cx="816.5" cy="525.0" rx="1.2" ry="1.7" transform="rotate(160 816.5 525.0)" fill="#2a2a2a" fill-opacity="0.5"/>
<ellipse cx="826.6" cy="506.8" rx="1.7" ry="1.1" transform="rotate(113 826.6 506.8)" fill="#2a2a2a" fill-opacity="0.5"/>
<ellipse cx="822.9" cy="483.7" rx="1.6" ry="1.6" transform="rotate(407 822.9 483.7)" fill="#2e2e2e" fill-opacity="0.5"/>
<ellipse cx="820.7" cy="519.8" rx="2.6" ry="1.1" transform="rotate(147 820.7 519.8)" fill="#2e2e2e" fill-opacity="0.5"/>
<ellipse cx="798.4" cy="521.0" rx="1.4" ry="1.3" transform="rotate(201 798.4 521.0)" fill="#303030" fill-opacity="0.5"/>
<ellipse cx="797.9" cy="513.6" rx="1.5" ry="1.6" transform="rotate(211 797.9 513.6)" fill="#484848" fill-opacity="0.5"/>
<ellipse cx="797.7" cy="511.0" rx="2.3" ry="1.3" transform="rotate(217 797.7 511.0)" fill="#303030" fill-opacity="0.5"/>
<ellipse cx="816.4" cy="514.0" rx="2.8" ry="1.8" transform="rotate(148 816.4 514.0)" fill="#303030" fill-opacity="0.5"/>
<ellipse cx="807.8" cy="473.5" rx="2.0" ry="1.4" transform="rotate(362 807.8 473.5)" fill="#303030" fill-opacity="0.5"/>
<ellipse cx="809.1" cy="478.7" rx="1.6" ry="1.2" transform="rotate(366 809.1 478.7)" fill="#303030" fill-opacity="0.5"/>
<ellipse cx="827.1" cy="481.7" rx="1.5" ry="1.1" transform="rotate(410 827.1 481.7)" fill="#484848" fill-opacity="0.5"/>
<ellipse cx="789.9" cy="492.5" rx="1.6" ry="1.2" transform="rotate(290 789.9 492.5)" fill="#2e2e2e" fill-opacity="0.5"/>
<ellipse cx="790.9" cy="494.7" rx="1.5" ry="1.7" transform="rotate(284 790.9 494.7)" fill="#4c4c4c" fill-opacity="0.5"/>
<ellipse cx="806.3" cy="515.9" rx="1.3" ry="1.0" transform="rotate(182 806.3 515.9)" fill="#2a2a2a" fill-opacity="0.5"/>
<ellipse cx="821.1" cy="481.0" rx="1.7" ry="2.0" transform="rotate(399 821.1 481.0)" fill="#4c4c4c" fill-opacity="0.5"/>
<ellipse cx="821.1" cy="510.9" rx="2.5" ry="1.7" transform="rotate(131 821.1 510.9)" fill="#2e2e2e" fill-opacity="0.5"/>
<ellipse cx="791.7" cy="508.0" rx="1.8" ry="1.7" transform="rotate(238 791.7 508.0)" fill="#2a2a2a" fill-opacity="0.5"/>
<ellipse cx="798.3" cy="514.4" rx="2.5" ry="1.8" transform="rotate(209 798.3 514.4)" fill="#303030" fill-opacity="0.5"/>
<ellipse cx="791.1" cy="501.8" rx="1.8" ry="1.2" transform="rotate(259 791.1 501.8)" fill="#303030" fill-opacity="0.5"/>
<ellipse cx="807.6" cy="513.8" rx="1.6" ry="1.5" transform="rotate(177 807.6 513.8)" fill="#484848" fill-opacity="0.5"/>
<ellipse cx="812.9" cy="512.7" rx="1.2" ry="1.3" transform="rotate(157 812.9 512.7)" fill="#303030" fill-opacity="0.5"/>
<ellipse cx="812.0" cy="525.9" rx="2.1" ry="2.0" transform="rotate(169 812.0 525.9)" fill="#303030" fill-opacity="0.5"/>
<ellipse cx="802.6" cy="512.2" rx="2.5" ry="1.7" transform="rotate(197 802.6 512.2)" fill="#4c4c4c" fill-opacity="0.5"/>
<ellipse cx="791.2" cy="476.5" rx="2.5" ry="1.6" transform="rotate(325 791.2 476.5)" fill="#484848" fill-opacity="0.5"/>
<ellipse cx="784.9" cy="502.7" rx="2.6" ry="1.4" transform="rotate(259 784.9 502.7)" fill="#303030" fill-opacity="0.5"/>
<ellipse cx="823.9" cy="519.0" rx="1.4" ry="1.6" transform="rotate(140 823.9 519.0)" fill="#484848" fill-opacity="0.5"/>
<ellipse cx="826.7" cy="508.1" rx="1.9" ry="1.1" transform="rotate(116 826.7 508.1)" fill="#2e2e2e" fill-opacity="0.5"/>
<ellipse cx="790.9" cy="498.4" rx="1.8" ry="0.9" transform="rotate(271 790.9 498.4)" fill="#4c4c4c" fill-opacity="0.5"/>
<ellipse cx="797.8" cy="473.8" rx="1.4" ry="1.8" transform="rotate(340 797.8 473.8)" fill="#303030" fill-opacity="0.5"/>
<ellipse cx="812.1" cy="482.7" rx="1.3" ry="1.5" transform="rotate(378 812.1 482.7)" fill="#4c4c4c" fill-opacity="0.5"/>
<ellipse cx="802.7" cy="515.1" rx="2.3" ry="1.4" transform="rotate(194 802.7 515.1)" fill="#4c4c4c" fill-opacity="0.5"/>
<ellipse cx="796.6" cy="481.8" rx="1.4" ry="2.0" transform="rotate(328 796.6 481.8)" fill="#2e2e2e" fill-opacity="0.5"/>
<ellipse cx="801.7" cy="518.9" rx="1.8" ry="1.0" transform="rotate(195 801.7 518.9)" fill="#2a2a2a" fill-opacity="0.5"/>
<ellipse cx="804.9" cy="476.4" rx="1.4" ry="0.9" transform="rotate(355 804.9 476.4)" fill="#303030" fill-opacity="0.5"/>
<ellipse cx="818.8" cy="506.7" rx="2.4" ry="1.6" transform="rotate(124 818.8 506.7)" fill="#4c4c4c" fill-opacity="0.5"/>
<ellipse cx="805.1" cy="482.1" rx="2.6" ry="1.9" transform="rotate(354 805.1 482.1)" fill="#303030" fill-opacity="0.5"/>
<ellipse cx="811.3" cy="522.4" rx="1.6" ry="1.1" transform="rotate(170 811.3 522.4)" fill="#2a2a2a" fill-opacity="0.5"/>
<ellipse cx="825.2" cy="488.7" rx="2.3" ry="1.3" transform="rotate(422 825.2 488.7)" fill="#2a2a2a" fill-opacity="0.5"/>
<ellipse cx="789.5" cy="478.5" rx="1.3" ry="1.1" transform="rotate(319 789.5 478.5)" fill="#303030" fill-opacity="0.5"/>
<ellipse cx="802.4" cy="519.2" rx="1.8" ry="1.3" transform="rotate(192 802.4 519.2)" fill="#2e2e2e" fill-opacity="0.5"/>
<ellipse cx="808.1" cy="526.9" rx="1.4" ry="1.0" transform="rotate(178 808.1 526.9)" fill="#2e2e2e" fill-opacity="0.5"/>
<ellipse cx="827.9" cy="494.4" rx="1.9" ry="1.1" transform="rotate(439 827.9 494.4)" fill="#2e2e2e" fill-opacity="0.5"/>
<ellipse cx="829.9" cy="495.3" rx="2.0" ry="1.6" transform="rotate(442 829.9 495.3)" fill="#2a2a2a" fill-opacity="0.5"/>
<line x1="827.22" y1="506.77" x2="832.51" y2="514.03" stroke="#2c2c2c" stroke-width="1.3" stroke-opacity="0.75"/>
<line x1="817.21" y1="517.92" x2="816.60" y2="526.88" stroke="#2c2c2c" stroke-width="1.3" stroke-opacity="0.75"/>
<line x1="802.38" y1="520.03" x2="796.15" y2="526.50" stroke="#2c2c2c" stroke-width="1.3" stroke-opacity="0.75"/>
<line x1="789.66" y1="512.11" x2="780.73" y2="513.06" stroke="#2c2c2c" stroke-width="1.3" stroke-opacity="0.75"/>
<line x1="785.01" y1="497.87" x2="777.56" y2="492.86" stroke="#2c2c2c" stroke-width="1.3" stroke-opacity="0.75"/>
<line x1="790.60" y1="483.97" x2="788.11" y2="475.34" stroke="#2c2c2c" stroke-width="1.3" stroke-opacity="0.75"/>
<line x1="803.82" y1="476.92" x2="807.46" y2="468.71" stroke="#2c2c2c" stroke-width="1.3" stroke-opacity="0.75"/>
<line x1="818.48" y1="480.01" x2="826.55" y2="476.06" stroke="#2c2c2c" stroke-width="1.3" stroke-opacity="0.75"/>
<line x1="827.72" y1="491.80" x2="836.44" y2="493.96" stroke="#2c2c2c" stroke-width="1.3" stroke-opacity="0.75"/>
<circle cx="806.9" cy="498.6" r="21.799999999999997" fill="none" stroke="#353535" stroke-width="1.1" stroke-opacity="0.8"/>
<ellipse cx="810.6" cy="494.8" rx="11.799999999999999" ry="11.2" fill="none" stroke="#4a4a4a" stroke-width="1.6" stroke-opacity="0.8"/>
<path d="M992.71,498.60 L991.91,501.16 L991.06,503.60 L990.46,506.04 L990.13,508.58 L989.78,511.23 L989.03,513.80 L987.65,516.07 L985.69,517.89 L983.43,519.33 L981.21,520.66 L979.19,522.15 L977.30,523.88 L975.33,525.68 L973.10,527.17 L970.58,528.02 L967.91,528.15 L965.26,527.81 L962.70,527.40 L960.19,527.23 L957.63,527.35 L954.97,527.46 L952.30,527.17 L949.83,526.20 L947.70,524.59 L945.88,522.62 L944.19,520.66 L942.37,518.93 L940.34,517.36 L938.22,515.74 L936.37,513.80 L935.10,511.47 L934.50,508.86 L934.38,506.19 L934.34,503.60 L934.07,501.11 L933.51,498.60 L932.94,496.00 L932.76,493.32 L933.28,490.72 L934.50,488.34 L936.13,486.21 L937.76,484.20 L939.15,482.11 L940.34,479.84 L941.57,477.47 L943.16,475.31 L945.23,473.65 L947.70,472.61 L950.31,472.03 L952.85,471.54 L955.26,470.84 L957.63,469.85 L960.10,468.84 L962.70,468.20 L965.35,468.26 L967.91,469.05 L970.29,470.28 L972.55,471.54 L974.85,472.55 L977.30,473.32 L979.84,474.12 L982.24,475.31 L984.24,477.06 L985.69,479.31 L986.72,481.78 L987.64,484.20 L988.75,486.45 L990.13,488.62 L991.56,490.87 L992.64,493.32 L993.04,495.95 Z M948.30,497.30 a14.4,13.2 0 1,1 28.8,0 a14.4,13.2 0 1,1 -28.8,0 Z" fill="#3a3a3a" fill-opacity="0.84" fill-rule="evenodd"/>
<ellipse cx="962.2" cy="523.2" rx="1.7" ry="1.3" transform="rotate(181 962.2 523.2)" fill="#303030" fill-opacity="0.5"/>
<ellipse cx="950.0" cy="518.6" rx="1.2" ry="2.0" transform="rotate(212 950.0 518.6)" fill="#4c4c4c" fill-opacity="0.5"/>
<ellipse cx="979.9" cy="503.1" rx="1.2" ry="1.0" transform="rotate(105 979.9 503.1)" fill="#4c4c4c" fill-opacity="0.5"/>
<ellipse cx="973.8" cy="523.6" rx="2.8" ry="1.4" transform="rotate(156 973.8 523.6)" fill="#4c4c4c" fill-opacity="0.5"/>
<ellipse cx="968.4" cy="474.5" rx="1.3" ry="1.9" transform="rotate(373 968.4 474.5)" fill="#484848" fill-opacity="0.5"/>
<ellipse cx="952.1" cy="521.5" rx="2.8" ry="1.3" transform="rotate(205 952.1 521.5)" fill="#2e2e2e" fill-opacity="0.5"/>
<ellipse cx="940.3" cy="482.0" rx="2.2" ry="1.2" transform="rotate(306 940.3 482.0)" fill="#2e2e2e" fill-opacity="0.5"/>
<ellipse cx="944.7" cy="512.2" rx="2.5" ry="1.6" transform="rotate(233 944.7 512.2)" fill="#2a2a2a" fill-opacity="0.5"/>
<ellipse cx="978.1" cy="475.6" rx="1.4" ry="1.7" transform="rotate(394 978.1 475.6)" fill="#4c4c4c" fill-opacity="0.5"/>
<ellipse cx="975.1" cy="517.1" rx="2.4" ry="2.0" transform="rotate(146 975.1 517.1)" fill="#303030" fill-opacity="0.5"/>
<ellipse cx="982.4" cy="502.6" rx="2.7" ry="1.5" transform="rotate(101 982.4 502.6)" fill="#4c4c4c" fill-opacity="0.5"/>
<ellipse cx="982.5" cy="507.4" rx="2.8" ry="1.8" transform="rotate(114 982.5 507.4)" fill="#2e2e2e" fill-opacity="0.5"/>
<ellipse cx="938.5" cy="500.2" rx="1.2" ry="1.8" transform="rotate(266 938.5 500.2)" fill="#2a2a2a" fill-opacity="0.5"/>
<ellipse cx="988.1" cy="506.5" rx="2.8" ry="1.8" transform="rotate(107 988.1 506.5)" fill="#4c4c4c" fill-opacity="0.5"/>
<ellipse cx="980.7" cy="512.4" rx="1.5" ry="1.2" transform="rotate(128 980.7 512.4)" fill="#303030" fill-opacity="0.5"/>
<ellipse cx="984.6" cy="509.1" rx="2.7" ry="1.5" transform="rotate(116 984.6 509.1)" fill="#4c4c4c" fill-opacity="0.5"/>
<ellipse cx="955.2" cy="481.7" rx="2.3" ry="1.0" transform="rotate(336 955.2 481.7)" fill="#2a2a2a" fill-opacity="0.5"/>
<ellipse cx="945.6" cy="490.2" rx="1.9" ry="1.0" transform="rotate(296 945.6 490.2)" fill="#2e2e2e" fill-opacity="0.5"/>
<ellipse cx="970.0" cy="517.7" rx="1.8" ry="1.8" transform="rotate(159 970.0 517.7)" fill="#2a2a2a" fill-opacity="0.5"/>
<ellipse cx="945.3" cy="500.7" rx="1.4" ry="1.8" transform="rotate(263 945.3 500.7)" fill="#2e2e2e" fill-opacity="0.5"/>
<ellipse cx="975.4" cy="516.8" rx="1.5" ry="1.5" transform="rotate(145 975.4 516.8)" fill="#2e2e2e" fill-opacity="0.5"/>
<ellipse cx="949.9" cy="486.3" rx="2.2" ry="1.1" transform="rotate(314 949.9 486.3)" fill="#2a2a2a" fill-opacity="0.5"/>
<ellipse cx="942.0" cy="485.5" rx="1.3" ry="1.8" transform="rotate(302 942.0 485.5)" fill="#484848" fill-opacity="0.5"/>
<ellipse cx="973.2" cy="473.4" rx="2.4" ry="1.0" transform="rotate(383 973.2 473.4)" fill="#2a2a2a" fill-opacity="0.5"/>
<ellipse cx="937.5" cy="502.1" rx="2.8" ry="1.0" transform="rotate(262 937.5 502.1)" fill="#4c4c4c" fill-opacity="0.5"/>
<ellipse cx="976.9" cy="481.0" rx="2.1" ry="1.2" transform="rotate(399 976.9 481.0)" fill="#484848" fill-opacity="0.5"/>
<ellipse cx="985.5" cy="503.4" rx="1.8" ry="1.4" transform="rotate(102 985.5 503.4)" fill="#2a2a2a" fill-opacity="0.5"/>
<ellipse cx="981.4" cy="485.6" rx="1.2" ry="1.5" transform="rotate(415 981.4 485.6)" fill="#4c4c4c" fill-opacity="0.5"/>
<ellipse cx="959.4" cy="474.8" rx="2.7" ry="0.9" transform="rotate(352 959.4 474.8)" fill="#2a2a2a" fill-opacity="0.5"/>
<ellipse cx="949.2" cy="514.4" rx="1.9" ry="1.6" transform="rotate(221 949.2 514.4)" fill="#303030" fill-opacity="0.5"/>
<ellipse cx="986.4" cy="493.9" rx="2.4" ry="1.7" transform="rotate(439 986.4 493.9)" fill="#484848" fill-opacity="0.5"/>
<ellipse cx="953.4" cy="517.9" rx="1.9" ry="1.5" transform="rotate(206 953.4 517.9)" fill="#4c4c4c" fill-opacity="0.5"/>
<ellipse cx="986.9" cy="486.2" rx="2.0" ry="1.6" transform="rotate(423 986.9 486.2)" fill="#2e2e2e" fill-opacity="0.5"/>
<ellipse cx="961.5" cy="516.3" rx="2.5" ry="1.8" transform="rotate(184 961.5 516.3)" fill="#2e2e2e" fill-opacity="0.5"/>
<ellipse cx="985.6" cy="499.8" rx="1.3" ry="2.0" transform="rotate(93 985.6 499.8)" fill="#4c4c4c" fill-opacity="0.5"/>
<ellipse cx="954.4" cy="475.5" rx="1.4" ry="1.1" transform="rotate(340 954.4 475.5)" fill="#2e2e2e" fill-opacity="0.5"/>
<ellipse cx="979.5" cy="483.7" rx="2.6" ry="1.5" transform="rotate(408 979.5 483.7)" fill="#2e2e2e" fill-opacity="0.5"/>
<ellipse cx="935.5" cy="499.2" rx="2.3" ry="1.2" transform="rotate(269 935.5 499.2)" fill="#2e2e2e" fill-opacity="0.5"/>
<ellipse cx="987.0" cy="493.9" rx="2.7" ry="1.6" transform="rotate(439 987.0 493.9)" fill="#303030" fill-opacity="0.5"/>
<ellipse cx="943.4" cy="486.7" rx="1.5" ry="1.9" transform="rotate(302 943.4 486.7)" fill="#303030" fill-opacity="0.5"/>
<ellipse cx="942.5" cy="489.7" rx="2.0" ry="1.0" transform="rotate(294 942.5 489.7)" fill="#2a2a2a" fill-opacity="0.5"/>
<ellipse cx="940.2" cy="491.7" rx="2.0" ry="1.7" transform="rotate(287 940.2 491.7)" fill="#4c4c4c" fill-opacity="0.5"/>
<ellipse cx="937.0" cy="491.8" rx="1.4" ry="1.3" transform="rotate(285 937.0 491.8)" fill="#484848" fill-opacity="0.5"/>
<ellipse cx="978.7" cy="490.5" rx="2.3" ry="2.0" transform="rotate(423 978.7 490.5)" fill="#4c4c4c" fill-opacity="0.5"/>
<ellipse cx="967.5" cy="479.9" rx="1.8" ry="1.0" transform="rotate(374 967.5 479.9)" fill="#2e2e2e" fill-opacity="0.5"/>
<ellipse cx="940.9" cy="497.0" rx="2.2" ry="1.0" transform="rotate(274 940.9 497.0)" fill="#4c4c4c" fill-opacity="0.5"/>
<line x1="982.30" y1="508.59" x2="986.92" y2="516.31" stroke="#2c2c2c" stroke-width="1.3" stroke-opacity="0.75"/>
<line x1="971.30" y1="518.85" x2="969.87" y2="527.73" stroke="#2c2c2c" stroke-width="1.3" stroke-opacity="0.75"/>
<line x1="956.27" y1="519.64" x2="949.47" y2="525.52" stroke="#2c2c2c" stroke-width="1.3" stroke-opacity="0.75"/>
<line x1="944.25" y1="510.58" x2="935.26" y2="510.72" stroke="#2c2c2c" stroke-width="1.3" stroke-opacity="0.75"/>
<line x1="940.86" y1="495.92" x2="933.89" y2="490.25" stroke="#2c2c2c" stroke-width="1.3" stroke-opacity="0.75"/>
<line x1="947.70" y1="482.51" x2="946.00" y2="473.68" stroke="#2c2c2c" stroke-width="1.3" stroke-opacity="0.75"/>
<line x1="961.55" y1="476.63" x2="965.92" y2="468.77" stroke="#2c2c2c" stroke-width="1.3" stroke-opacity="0.75"/>
<line x1="975.94" y1="481.03" x2="984.34" y2="477.82" stroke="#2c2c2c" stroke-width="1.3" stroke-opacity="0.75"/>
<line x1="984.14" y1="493.65" x2="992.63" y2="496.60" stroke="#2c2c2c" stroke-width="1.3" stroke-opacity="0.75"/>
<circle cx="962.7" cy="498.6" r="21.9" fill="none" stroke="#353535" stroke-width="1.1" stroke-opacity="0.8"/>
<ellipse cx="962.7" cy="497.3" rx="15.6" ry="14.399999999999999" fill="none" stroke="#4a4a4a" stroke-width="1.6" stroke-opacity="0.8"/>
</g></svg></div>
</div>
</body></html>
